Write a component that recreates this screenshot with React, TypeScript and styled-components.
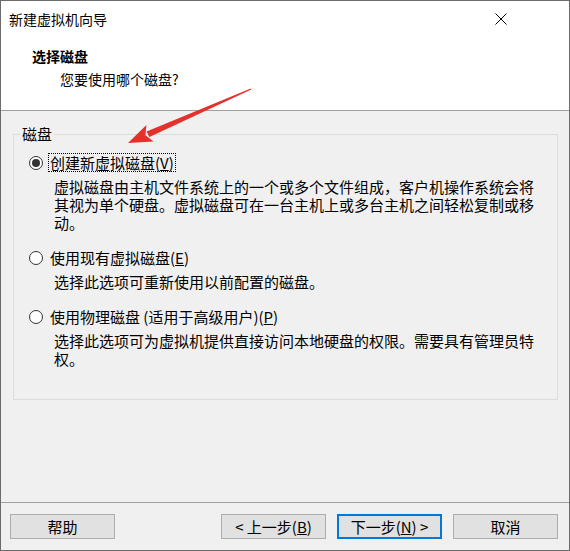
import React from "react";
import styled, { createGlobalStyle } from "styled-components";

const GlobalStyle = createGlobalStyle`
  html, body {
    margin: 0;
    padding: 0;
    background: #ffffff;
  }
  body {
    font-family: "Noto Sans CJK SC", "Liberation Sans", sans-serif;
    color: #000;
  }
`;

const Window = styled.div`
  position: relative;
  width: 570px;
  height: 551px;
  box-sizing: border-box;
  border: 1px solid #6b6b6b;
  display: flex;
  flex-direction: column;
  background: #f0f0f0;
  overflow: hidden;
`;

const TitleBar = styled.div`
  height: 36px;
  flex: none;
  display: flex;
  align-items: center;
  justify-content: space-between;
  background: #fff;
  padding-left: 8px;
  font-size: 14px;
  line-height: 17px;
`;

const CloseButton = styled.div`
  width: 46px;
  height: 36px;
  margin-right: 45px;
  display: flex;
  align-items: center;
  justify-content: center;
`;

const Header = styled.div`
  flex: none;
  box-sizing: border-box;
  height: 74px;
  background: #fff;
  border-bottom: 1px solid #a0a0a0;
  padding: 11px 0 0 31px;
`;

const HeaderTitle = styled.div`
  font-size: 14px;
  line-height: 17px;
  font-weight: 700;
`;

const HeaderSub = styled.div`
  font-size: 14px;
  line-height: 17px;
  margin: 6px 0 0 28px;
`;

const Body = styled.div`
  flex: 1;
  padding: 14px 11px 0 12px;
`;

const Group = styled.fieldset`
  margin: 0;
  padding: 0;
  min-width: 0;
  border: 1px solid #dcdcdc;
`;

const Legend = styled.legend`
  margin-left: 6px;
  padding: 0 2px;
  font-size: 15px;
  line-height: 18px;
`;

const Options = styled.div`
  padding: 10px 0 31px 15px;
  display: flex;
  flex-direction: column;
  gap: 16px;
`;

const Option = styled.div`
  display: flex;
  flex-direction: column;
`;

const OptionRow = styled.div`
  display: flex;
  align-items: center;
  gap: 5px;
`;

const Radio = styled.span<{ $checked?: boolean }>`
  width: 14px;
  height: 14px;
  box-sizing: border-box;
  border-radius: 50%;
  border: 1px solid #333;
  background: #fff;
  display: flex;
  align-items: center;
  justify-content: center;
  &::after {
    content: "";
    width: 8px;
    height: 8px;
    border-radius: 50%;
    background: ${(p) => (p.$checked ? "#333" : "transparent")};
  }
`;

const OptionLabel = styled.span<{ $focused?: boolean }>`
  font-size: 15px;
  line-height: 17px;
  padding: 0 1px;
  border: 1px dotted ${(p) => (p.$focused ? "#000" : "transparent")};
`;

const Desc = styled.div`
  margin: 6px 0 0 25px;
  width: 482px;
  font-size: 15px;
  line-height: 18px;
`;

const Footer = styled.div`
  flex: none;
  height: 48px;
  box-sizing: border-box;
  border-top: 1px solid #a0a0a0;
  padding: 11px 11px 0 9px;
  display: flex;
  gap: 11px;
`;

const Button = styled.div<{ $default?: boolean }>`
  width: 105px;
  height: 25px;
  box-sizing: border-box;
  background: #e1e1e1;
  border: ${(p) => (p.$default ? "2px solid #0078d7" : "1px solid #adadad")};
  display: flex;
  align-items: center;
  justify-content: center;
  font-size: 15px;
  line-height: 17px;
`;

const Spacer = styled.div`
  flex: 1;
`;

const Arrow = styled.svg`
  position: absolute;
  left: 0;
  top: 0;
  pointer-events: none;
`;

export default function App() {
  return (
    <>
      <GlobalStyle />
      <Window>
        <TitleBar>
          <span>新建虚拟机向导</span>
          <CloseButton>
            <svg width="12" height="12" viewBox="0 0 12 12">
              <path d="M0.5 0.5L11.5 11.5M11.5 0.5L0.5 11.5" stroke="#000" strokeWidth="1" />
            </svg>
          </CloseButton>
        </TitleBar>
        <Header>
          <HeaderTitle>选择磁盘</HeaderTitle>
          <HeaderSub>您要使用哪个磁盘?</HeaderSub>
        </Header>
        <Body>
          <Group>
            <Legend>磁盘</Legend>
            <Options>
              <Option>
                <OptionRow>
                  <Radio $checked />
                  <OptionLabel $focused>
                    创建新虚拟磁盘(<u>V</u>)
                  </OptionLabel>
                </OptionRow>
                <Desc>
                  虚拟磁盘由主机文件系统上的一个或多个文件组成，客户机操作系统会将其视为单个硬盘。虚拟磁盘可在一台主机上或多台主机之间轻松复制或移动。
                </Desc>
              </Option>
              <Option>
                <OptionRow>
                  <Radio />
                  <OptionLabel>
                    使用现有虚拟磁盘(<u>E</u>)
                  </OptionLabel>
                </OptionRow>
                <Desc>选择此选项可重新使用以前配置的磁盘。</Desc>
              </Option>
              <Option>
                <OptionRow>
                  <Radio />
                  <OptionLabel>
                    使用物理磁盘 (适用于高级用户)(<u>P</u>)
                  </OptionLabel>
                </OptionRow>
                <Desc>
                  选择此选项可为虚拟机提供直接访问本地硬盘的权限。需要具有管理员特权。
                </Desc>
              </Option>
            </Options>
          </Group>
        </Body>
        <Footer>
          <Button>帮助</Button>
          <Spacer />
          <Button>
            &lt; 上一步(<u>B</u>)
          </Button>
          <Button $default>
            下一步(<u>N</u>) &gt;
          </Button>
          <Button>取消</Button>
        </Footer>
        <Arrow width="570" height="551" viewBox="0 0 570 551">
          <polygon points="145.6,130.6 148.4,136 250.3,88.5 249.7,87.5" fill="#e5312b" />
          <polygon points="127,142 145.4,124 144.4,134.3 152.6,140.6" fill="#e5312b" />
        </Arrow>
      </Window>
    </>
  );
}
